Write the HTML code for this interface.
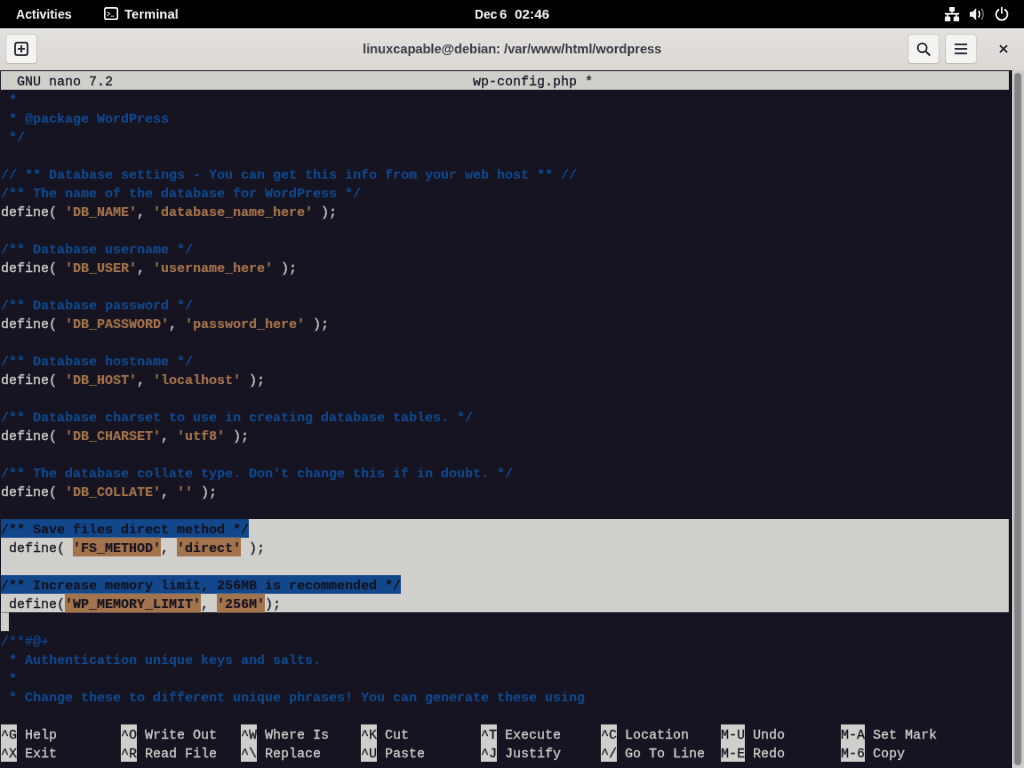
<!DOCTYPE html>
<html><head><meta charset="utf-8"><title>Terminal</title>
<style>
html,body{margin:0;padding:0;width:1024px;height:768px;overflow:hidden;background:#171421}
#root{position:absolute;left:0;top:0;width:1160px;height:872px;transform:scale(0.8888889);transform-origin:0 0;background:#171421;overflow:hidden;font-family:"Liberation Sans",sans-serif}
.b{position:absolute}
#txt{position:absolute;left:0;top:0;width:1152px;height:864px;will-change:transform}
.t{position:absolute;white-space:pre;font-family:"Liberation Mono",monospace;font-size:15px;letter-spacing:-0.0015px;line-height:21px;height:21px;padding-top:1.6px;box-sizing:border-box}
.bd{font-weight:bold;-webkit-text-stroke:0.2px}
.t:not(.bd){-webkit-text-stroke:0.3px}
.nm{color:#d0cfcc}.cm{color:#12488b}.st{color:#a2734c}.inv{color:#171421}
.sx{position:absolute;white-space:pre;font-weight:bold;transform-origin:0 50%;display:block;will-change:transform}
#top{position:absolute;left:0;top:0;width:1160px;height:32px;background:#000;color:#f2f2f2;line-height:32px}
#hdr{position:absolute;left:0;top:32px;width:1160px;height:47px;background:linear-gradient(to bottom,#e3e1de,#dbd8d4);box-shadow:inset 0 1px rgba(255,255,255,.7)}
#hdr .btn{position:absolute;top:7px;width:34px;height:32px;border-radius:3.5px;background:#f4f3f1;box-shadow:0 0 0 1px rgba(0,0,0,.06),0 1px 1px rgba(0,0,0,.08)}
#sb{position:absolute;left:1138px;top:79px;width:22px;height:793px;background:#cfcfcd;border-left:1px solid #b9b9b6;box-sizing:border-box}
#sb i{position:absolute;left:2px;top:3px;width:8px;height:779px;border-radius:4px;background:#7f8383}
svg{position:absolute;overflow:visible}
</style></head><body><div id="root">
<div id="top"><span class="sx" style="left:18.0px;top:-0.2px;font-size:15.5px;transform:scaleX(0.9071);">Activities</span><span class="sx" style="left:139.6px;top:-0.2px;font-size:15.5px;transform:scaleX(0.9569);">Terminal</span><span class="sx" style="left:534.4px;top:-0.2px;font-size:15.5px;transform:scaleX(0.8915);">Dec</span><span class="sx" style="left:562.0px;top:-0.2px;font-size:15.5px;transform:scaleX(0.9677);">6</span><span class="sx" style="left:578.9px;top:-0.2px;font-size:15.5px;transform:scaleX(0.9844);">02:46</span>
<svg style="left:117px;top:8.4px" width="16" height="15" viewBox="0 0 16 15"><rect x="0.9" y="0.9" width="14.2" height="12.7" rx="2" fill="none" stroke="#f2f2f2" stroke-width="1.8"/><path d="M3.6 5.4 L6.4 7.6 L3.6 9.8" fill="none" stroke="#b0b0b0" stroke-width="1.3"/><path d="M7.6 10.2 H11.4" stroke="#b0b0b0" stroke-width="1.3"/></svg>
<svg style="left:1063px;top:8px" width="16" height="16" viewBox="0 0 16 16" fill="#f2f2f2"><rect x="5" y="0" width="6" height="4.8" rx=".6"/><rect x="7.2" y="4" width="1.6" height="3.5"/><rect x="0" y="6.5" width="16" height="2"/><rect x="2.1" y="8" width="1.8" height="3.5"/><rect x="12.1" y="8" width="1.8" height="3.5"/><rect x="0" y="10.6" width="6.2" height="5.4" rx=".6"/><rect x="9.8" y="10.6" width="6.2" height="5.4" rx=".6"/></svg>
<svg style="left:1091px;top:8px" width="18" height="16" viewBox="0 0 18 16"><path d="M0 5.2 H3.2 L7.2 1 V15 L3.2 10.8 H0 Z" fill="#f2f2f2"/><path d="M9.9 4.3 Q12.4 8 9.9 11.7" fill="none" stroke="#f2f2f2" stroke-width="1.7"/><path d="M13 1.9 Q17.2 8 13 14.1" fill="none" stroke="#66666f" stroke-width="1.8"/></svg>
<svg style="left:1119px;top:7px" width="16" height="18" viewBox="0 0 16 18"><path d="M4.3 3.9 A6.4 6.4 0 1 0 11.7 3.9" fill="none" stroke="#f2f2f2" stroke-width="1.9" stroke-linecap="round"/><path d="M8 1.6 V7.6" stroke="#f2f2f2" stroke-width="1.9" stroke-linecap="round"/></svg>
</div>
<div id="hdr">
<div class="btn" style="left:7px"></div>
<div class="btn" style="left:1022px"></div>
<div class="btn" style="left:1064px"></div>
<span class="sx" style="left:407.6px;top:-0.7px;font-size:15px;transform:scaleX(0.9757);line-height:47px;color:#3a3945">linuxcapable@debian: /var/www/html/wordpress</span>
<svg style="left:16px;top:15px" width="16" height="16" viewBox="0 0 16 16"><rect x="1" y="1" width="14" height="14" rx="2.6" fill="none" stroke="#2f2e3a" stroke-width="2"/><path d="M4 8 H12 M8 4 V12" stroke="#2f2e3a" stroke-width="2"/></svg>
<svg style="left:1031px;top:15px" width="16" height="16" viewBox="0 0 16 16"><circle cx="6.5" cy="6.8" r="5" fill="none" stroke="#2f2e3a" stroke-width="2"/><path d="M10.2 10.5 L15.3 15.4" stroke="#2f2e3a" stroke-width="2.2"/></svg>
<svg style="left:1073px;top:15px" width="16" height="16" viewBox="0 0 16 16"><path d="M1 3 H15 M1 8 H15 M1 13 H15" stroke="#2f2e3a" stroke-width="1.9"/></svg>
<svg style="left:1121px;top:15px" width="16" height="16" viewBox="0 0 16 16"><path d="M4 4 L12 12 M12 4 L4 12" stroke="#2f2e3a" stroke-width="2.1"/></svg>

</div>
<div class="b" style="left:1px;top:80px;width:1134px;height:21px;background:#d0cfcc"></div><div class="b" style="left:0;top:0;width:1152px;height:864px;background:#d0cfcc;clip-path:polygon(279px 584px,1135px 584px,1135px 689px,1px 689px,1px 667px,450px 667px,450px 648px,1px 648px,1px 604px,279px 604px)"></div><div class="b" style="left:1px;top:584px;width:279px;height:21px;background:#12488b"></div><div class="b" style="left:82px;top:605px;width:99px;height:21px;background:#a2734c"></div><div class="b" style="left:199px;top:605px;width:72px;height:21px;background:#a2734c"></div><div class="b" style="left:1px;top:647px;width:450px;height:21px;background:#12488b"></div><div class="b" style="left:73px;top:668px;width:153px;height:21px;background:#a2734c"></div><div class="b" style="left:244px;top:668px;width:54px;height:21px;background:#a2734c"></div><div class="b" style="left:1px;top:689px;width:9px;height:21px;background:#d0cfcc"></div><div class="b" style="left:1px;top:815px;width:18px;height:42px;background:#d0cfcc"></div><div class="b" style="left:136px;top:815px;width:18px;height:42px;background:#d0cfcc"></div><div class="b" style="left:271px;top:815px;width:18px;height:42px;background:#d0cfcc"></div><div class="b" style="left:406px;top:815px;width:18px;height:42px;background:#d0cfcc"></div><div class="b" style="left:541px;top:815px;width:18px;height:42px;background:#d0cfcc"></div><div class="b" style="left:676px;top:815px;width:18px;height:42px;background:#d0cfcc"></div><div class="b" style="left:811px;top:815px;width:27px;height:42px;background:#d0cfcc"></div><div class="b" style="left:946px;top:815px;width:27px;height:42px;background:#d0cfcc"></div><div id="txt"><span class="t inv" style="left:19px;top:80px">GNU nano 7.2</span><span class="t inv" style="left:532px;top:80px">wp-config.php *</span><span class="t cm bd" style="left:1px;top:101px"> *</span><span class="t cm bd" style="left:1px;top:122px"> * @package WordPress</span><span class="t cm bd" style="left:1px;top:143px"> */</span><span class="t cm bd" style="left:1px;top:185px">// ** Database settings - You can get this info from your web host ** //</span><span class="t cm bd" style="left:1px;top:206px">/** The name of the database for WordPress */</span><span class="t nm" style="left:1px;top:227px">define( </span><span class="t st bd" style="left:73px;top:227px">'DB_NAME'</span><span class="t nm" style="left:154px;top:227px">, </span><span class="t st bd" style="left:172px;top:227px">'database_name_here'</span><span class="t nm" style="left:352px;top:227px"> );</span><span class="t cm bd" style="left:1px;top:269px">/** Database username */</span><span class="t nm" style="left:1px;top:290px">define( </span><span class="t st bd" style="left:73px;top:290px">'DB_USER'</span><span class="t nm" style="left:154px;top:290px">, </span><span class="t st bd" style="left:172px;top:290px">'username_here'</span><span class="t nm" style="left:307px;top:290px"> );</span><span class="t cm bd" style="left:1px;top:332px">/** Database password */</span><span class="t nm" style="left:1px;top:353px">define( </span><span class="t st bd" style="left:73px;top:353px">'DB_PASSWORD'</span><span class="t nm" style="left:190px;top:353px">, </span><span class="t st bd" style="left:208px;top:353px">'password_here'</span><span class="t nm" style="left:343px;top:353px"> );</span><span class="t cm bd" style="left:1px;top:395px">/** Database hostname */</span><span class="t nm" style="left:1px;top:416px">define( </span><span class="t st bd" style="left:73px;top:416px">'DB_HOST'</span><span class="t nm" style="left:154px;top:416px">, </span><span class="t st bd" style="left:172px;top:416px">'localhost'</span><span class="t nm" style="left:271px;top:416px"> );</span><span class="t cm bd" style="left:1px;top:458px">/** Database charset to use in creating database tables. */</span><span class="t nm" style="left:1px;top:479px">define( </span><span class="t st bd" style="left:73px;top:479px">'DB_CHARSET'</span><span class="t nm" style="left:181px;top:479px">, </span><span class="t st bd" style="left:199px;top:479px">'utf8'</span><span class="t nm" style="left:253px;top:479px"> );</span><span class="t cm bd" style="left:1px;top:521px">/** The database collate type. Don't change this if in doubt. */</span><span class="t nm" style="left:1px;top:542px">define( </span><span class="t st bd" style="left:73px;top:542px">'DB_COLLATE'</span><span class="t nm" style="left:181px;top:542px">, </span><span class="t st bd" style="left:199px;top:542px">''</span><span class="t nm" style="left:217px;top:542px"> );</span><span class="t inv bd" style="left:1px;top:584px">/** Save files direct method */</span><span class="t inv" style="left:1px;top:605px"> define( </span><span class="t inv bd" style="left:82px;top:605px">'FS_METHOD'</span><span class="t inv" style="left:181px;top:605px">, </span><span class="t inv bd" style="left:199px;top:605px">'direct'</span><span class="t inv" style="left:271px;top:605px"> );</span><span class="t inv bd" style="left:1px;top:647px">/** Increase memory limit, 256MB is recommended */</span><span class="t inv" style="left:1px;top:668px"> define(</span><span class="t inv bd" style="left:73px;top:668px">'WP_MEMORY_LIMIT'</span><span class="t inv" style="left:226px;top:668px">, </span><span class="t inv bd" style="left:244px;top:668px">'256M'</span><span class="t inv" style="left:298px;top:668px">);</span><span class="t cm" style="left:1px;top:710px">/**#@+</span><span class="t cm bd" style="left:1px;top:731px"> * Authentication unique keys and salts.</span><span class="t cm bd" style="left:1px;top:752px"> *</span><span class="t cm bd" style="left:1px;top:773px"> * Change these to different unique phrases! You can generate these using</span><span class="t inv" style="left:1px;top:815px">^G</span><span class="t nm" style="left:28px;top:815px">Help</span><span class="t inv" style="left:136px;top:815px">^O</span><span class="t nm" style="left:163px;top:815px">Write Out</span><span class="t inv" style="left:271px;top:815px">^W</span><span class="t nm" style="left:298px;top:815px">Where Is</span><span class="t inv" style="left:406px;top:815px">^K</span><span class="t nm" style="left:433px;top:815px">Cut</span><span class="t inv" style="left:541px;top:815px">^T</span><span class="t nm" style="left:568px;top:815px">Execute</span><span class="t inv" style="left:676px;top:815px">^C</span><span class="t nm" style="left:703px;top:815px">Location</span><span class="t inv" style="left:811px;top:815px">M-U</span><span class="t nm" style="left:847px;top:815px">Undo</span><span class="t inv" style="left:946px;top:815px">M-A</span><span class="t nm" style="left:982px;top:815px">Set Mark</span><span class="t inv" style="left:1px;top:836px">^X</span><span class="t nm" style="left:28px;top:836px">Exit</span><span class="t inv" style="left:136px;top:836px">^R</span><span class="t nm" style="left:163px;top:836px">Read File</span><span class="t inv" style="left:271px;top:836px">^\</span><span class="t nm" style="left:298px;top:836px">Replace</span><span class="t inv" style="left:406px;top:836px">^U</span><span class="t nm" style="left:433px;top:836px">Paste</span><span class="t inv" style="left:541px;top:836px">^J</span><span class="t nm" style="left:568px;top:836px">Justify</span><span class="t inv" style="left:676px;top:836px">^/</span><span class="t nm" style="left:703px;top:836px">Go To Line</span><span class="t inv" style="left:811px;top:836px">M-E</span><span class="t nm" style="left:847px;top:836px">Redo</span><span class="t inv" style="left:946px;top:836px">M-6</span><span class="t nm" style="left:982px;top:836px">Copy</span></div>
<div id="sb"><i></i></div>
</div></body></html>
